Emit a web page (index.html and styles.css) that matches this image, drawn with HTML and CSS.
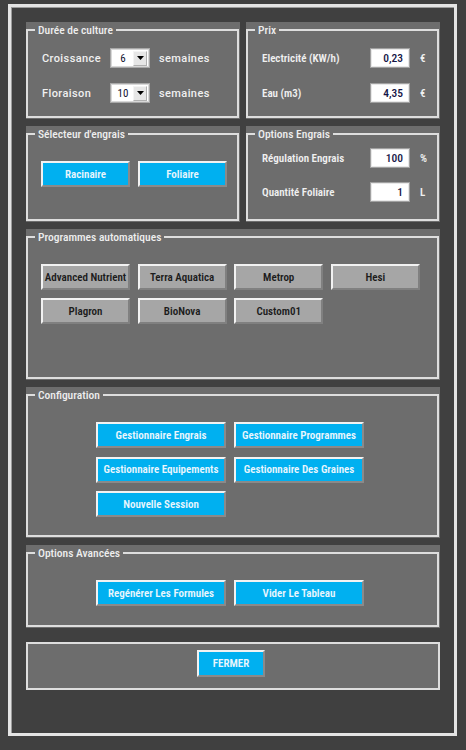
FILE: index.html
```html
<!DOCTYPE html>
<html lang="fr">
<head>
<meta charset="utf-8">
<title>Options</title>
<link rel="stylesheet" href="styles.css">
</head>
<body>
<div class="window">
  <div class="grid2">
    <div class="panel h1">
      <fieldset>
        <legend>Durée de culture</legend>
        <div class="content duree">
          <div class="frow">
            <span class="lbl lbl-duree">Croissance</span>
            <div class="combo"><span class="cval">6</span><span class="drop"><svg width="7" height="4" viewBox="0 0 7 4"><path d="M0 0H7L3.5 4Z" fill="#000"/></svg></span></div>
            <span class="unit-w">semaines</span>
          </div>
          <div class="frow">
            <span class="lbl lbl-duree">Floraison</span>
            <div class="combo"><span class="cval">10</span><span class="drop"><svg width="7" height="4" viewBox="0 0 7 4"><path d="M0 0H7L3.5 4Z" fill="#000"/></svg></span></div>
            <span class="unit-w">semaines</span>
          </div>
        </div>
      </fieldset>
    </div>
    <div class="panel h1">
      <fieldset>
        <legend>Prix</legend>
        <div class="content prix">
          <div class="frow">
            <span class="lbl lbl-r">Electricité (KW/h)</span>
            <div class="inbox">0,23</div>
            <span class="unit">€</span>
          </div>
          <div class="frow">
            <span class="lbl lbl-r">Eau (m3)</span>
            <div class="inbox">4,35</div>
            <span class="unit">€</span>
          </div>
        </div>
      </fieldset>
    </div>
    <div class="panel h2">
      <fieldset>
        <legend>Sélecteur d'engrais</legend>
        <div class="content btns selecteur">
          <button class="btn blue w89">Racinaire</button>
          <button class="btn blue w89">Foliaire</button>
        </div>
      </fieldset>
    </div>
    <div class="panel h2">
      <fieldset>
        <legend>Options Engrais</legend>
        <div class="content engrais">
          <div class="frow">
            <span class="lbl lbl-r">Régulation Engrais</span>
            <div class="inbox">100</div>
            <span class="unit">%</span>
          </div>
          <div class="frow">
            <span class="lbl lbl-r">Quantité Foliaire</span>
            <div class="inbox">1</div>
            <span class="unit">L</span>
          </div>
        </div>
      </fieldset>
    </div>
  </div>

  <div class="panel h3">
    <fieldset>
      <legend>Programmes automatiques</legend>
      <div class="content prog">
        <button class="btn gray">Advanced Nutrient</button>
        <button class="btn gray">Terra Aquatica</button>
        <button class="btn gray">Metrop</button>
        <button class="btn gray">Hesi</button>
        <button class="btn gray">Plagron</button>
        <button class="btn gray">BioNova</button>
        <button class="btn gray">Custom01</button>
      </div>
    </fieldset>
  </div>

  <div class="panel h3">
    <fieldset>
      <legend>Configuration</legend>
      <div class="content config">
        <button class="btn blue">Gestionnaire Engrais</button>
        <button class="btn blue">Gestionnaire Programmes</button>
        <button class="btn blue">Gestionnaire Equipements</button>
        <button class="btn blue">Gestionnaire Des Graines</button>
        <button class="btn blue">Nouvelle Session</button>
      </div>
    </fieldset>
  </div>

  <div class="panel h4">
    <fieldset>
      <legend>Options Avancées</legend>
      <div class="content config avancees">
        <button class="btn blue">Regénérer Les Formules</button>
        <button class="btn blue">Vider Le Tableau</button>
      </div>
    </fieldset>
  </div>

  <div class="panel closebox">
    <div class="closeinner">
      <button class="btn blue fermer">FERMER</button>
    </div>
  </div>
</div>
</body>
</html>
```

FILE: styles.css
```css
* { box-sizing: border-box; }

html, body {
  margin: 0;
  padding: 0;
  background: #404040;
}

body {
  font-family: Roboto, "DejaVu Sans Condensed", sans-serif;
  font-stretch: 75%;
  font-weight: 600;
  font-size: 11px;
  color: #ececec;
}

.window {
  margin: 4px 0 0 8px;
  width: 449px;
  height: 732px;
  border: 3px solid #e4e4e4;
  box-shadow: inset 1px 1px 0 #9c9c9c;
  padding: 15px 14px 0 15px;
  display: flex;
  flex-direction: column;
  gap: 7px;
}

.grid2 {
  display: grid;
  grid-template-columns: 214px 194px;
  column-gap: 6px;
  row-gap: 7px;
}

.panel {
  background: #6d6d6d;
  padding: 0 1px 1px 0;
}

.h1 { height: 97px; }
.h2 { height: 96px; }
.h3 { height: 151px; }
.h4 { height: 83px; }

.panel fieldset {
  margin: 0;
  padding: 0;
  min-width: 0;
  height: 100%;
  border: 2px solid #dedede;
}

.panel legend {
  margin-left: 7px;
  padding: 0 3px;
  font-size: 11.5px;
  line-height: 16px;
  color: #eeeeee;
  font-weight: 500;
}

.content { padding-left: 12px; }

.frow {
  display: flex;
  align-items: center;
  height: 20px;
}

.duree { padding-top: 10px; display: flex; flex-direction: column; gap: 15px; }
.prix { padding-top: 10px; display: flex; flex-direction: column; gap: 15px; }
.engrais { padding-top: 6px; display: flex; flex-direction: column; gap: 14px; }

.lbl {
  color: #f0f0f0;
  font-weight: 600;
}

.lbl-duree {
  width: 68px;
  font-stretch: 100%;
  font-weight: 500;
  font-size: 11px;
  letter-spacing: 0.4px;
}

.duree .frow { padding-left: 2px; }

.lbl-r {
  width: 110px;
  padding-left: 2px;
}

.combo {
  width: 40px;
  height: 20px;
  border: 1px solid #a8a8a8;
  box-shadow: inset 0 0 0 1px #d8d8d8;
  background: #ffffff;
  display: flex;
  align-items: center;
  padding: 2px;
}

.cval {
  flex: 1;
  text-align: center;
  color: #101030;
  font-size: 11px;
  font-weight: 400;
}

.drop {
  width: 14px;
  height: 15px;
  background: #e6e6e6;
  border: 1px solid #f4f4f4;
  border-right-color: #b0b0b0;
  border-bottom-color: #b0b0b0;
  display: flex;
  align-items: center;
  justify-content: center;
}

.unit-w {
  margin-left: 9px;
  font-stretch: 100%;
  font-weight: 500;
  font-size: 11px;
  letter-spacing: 0.4px;
  color: #f0f0f0;
}

.inbox {
  width: 40px;
  height: 20px;
  background: #ffffff;
  border: 1px solid #a0a0a0;
  box-shadow: inset 0 0 0 1px #e8e8e8;
  color: #141446;
  font-weight: 500;
  text-align: right;
  padding-right: 6px;
  line-height: 18px;
  font-size: 11.5px;
}

.unit {
  margin-left: 10px;
  color: #f0f0f0;
  font-weight: 600;
}

.btn {
  font-family: inherit;
  font-stretch: 75%;
  font-size: 11px;
  font-weight: 600;
  height: 26px;
  padding: 0;
  margin: 0;
  border: 2px solid;
  white-space: nowrap;
  cursor: pointer;
}

.blue {
  background: #00b0f0;
  color: #eaf6fd;
  border-color: #f2f2f2 #8a8a8a #8a8a8a #f2f2f2;
}

.gray {
  background: #a6a6a6;
  color: #1c1c1c;
  border-color: #f2f2f2 #808080 #808080 #f2f2f2;
}

.w89 { width: 89px; }

.btns {
  display: flex;
  gap: 8px;
  padding-top: 19px;
  padding-left: 13px;
}

.prog {
  display: grid;
  grid-template-columns: repeat(4, 89px);
  column-gap: 7.6px;
  row-gap: 8px;
  padding-top: 19px;
  padding-left: 13px;
}

.config {
  display: grid;
  grid-template-columns: repeat(2, 130px);
  column-gap: 8px;
  row-gap: 8.5px;
  padding-top: 19px;
  padding-left: 68px;
}

.closebox {
  margin-top: 7px;
  height: 48px;
  padding: 0;
}

.closeinner {
  height: 100%;
  border: 2px solid #dedede;
  padding: 6px 0 0 169px;
}

.fermer {
  width: 68px;
  height: 27px;
}
```
